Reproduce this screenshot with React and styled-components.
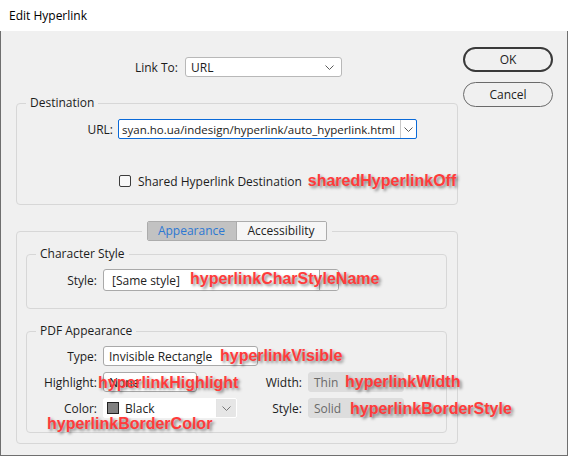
import React from 'react';
import styled, { createGlobalStyle } from 'styled-components';

const GlobalStyle = createGlobalStyle`
  html, body {
    margin: 0;
    padding: 0;
    background: #ffffff;
  }
  body {
    font-family: 'Open Sans', 'Noto Sans', sans-serif;
    font-size: 12px;
    color: #1c1c1c;
  }
`;

const Chevron = ({ color = '#5a5a5a' }) => (
  <svg width="9" height="5" viewBox="0 0 9 5">
    <path d="M0.5 0.5 L4.5 4.5 L8.5 0.5" fill="none" stroke={color} strokeWidth="1" />
  </svg>
);

const Frame = styled.div`
  width: 568px;
  height: 456px;
  display: flex;
  flex-direction: column;
`;

const TitleBar = styled.div`
  height: 31px;
  flex: none;
  background: #ffffff;
  display: flex;
  align-items: center;
  padding-left: 9px;
  font-size: 12px;
  color: #000;
`;

const Body = styled.div`
  flex: 1;
  background: #f0f0f0;
  border: 1px solid #6f6f6f;
  border-top: none;
  display: flex;
  align-items: flex-start;
  gap: 5px;
  padding: 16px 0 0 15px;
`;

const MainColumn = styled.div`
  width: 442px;
  display: flex;
  flex-direction: column;
  padding-top: 10px;
`;

const ButtonColumn = styled.div`
  width: 90px;
  display: flex;
  flex-direction: column;
  gap: 10px;
`;

const DialogButton = styled.button`
  height: 25px;
  box-sizing: border-box;
  border-radius: 13px;
  border: ${p => (p.$default ? '2px solid #3a3a3a' : '1px solid #6a6a6a')};
  background: #f0f0f0;
  font: inherit;
  font-size: 12px;
  color: #222;
  padding: 0;
`;

const LinkRow = styled.div`
  display: flex;
  align-items: center;
  height: 20px;
`;

const Label = styled.span`
  width: ${p => p.$w}px;
  flex: none;
  text-align: right;
  margin-right: ${p => p.$gap || 6}px;
  white-space: nowrap;
`;

const Select = styled.div`
  width: ${p => p.$w}px;
  height: 20px;
  box-sizing: border-box;
  background: #fff;
  border: 1px solid #b8b8b8;
  border-radius: 3px;
  display: flex;
  align-items: center;
  justify-content: space-between;
  padding: 0 7px 0 5px;
`;

const Group = styled.fieldset`
  margin: ${p => p.$mt || 0}px ${p => p.$mx || 0}px 0;
  padding: ${p => p.$pad};
  border: 1px solid #d7d7d7;
  border-radius: 4px;
  min-width: 0;
`;

const Legend = styled.legend`
  margin-left: 9px;
  padding: 0 4px;
  font-size: 12px;
  line-height: 16px;
`;

const TabLegend = styled.legend`
  margin: 0 auto;
  padding: 0 5px;
  line-height: 0;
`;

const TabStrip = styled.div`
  display: flex;
  border: 1px solid #acacac;
  border-radius: 2px;
  overflow: hidden;
`;

const Tab = styled.div`
  height: 18px;
  display: flex;
  align-items: center;
  justify-content: center;
  width: ${p => p.$w}px;
  font-size: 12px;
  background: ${p => (p.$active ? '#c2c2c2' : '#f6f6f6')};
  color: ${p => (p.$active ? '#2d78d2' : '#222')};
  & + & {
    border-left: 1px solid #acacac;
  }
`;

const Row = styled.div`
  position: relative;
  display: flex;
  align-items: center;
  height: ${p => p.$h || 20}px;
  margin-top: ${p => p.$mt || 0}px;
`;

const UrlCombo = styled.div`
  width: 299px;
  height: 20px;
  box-sizing: border-box;
  border: 1px solid #0a6ad9;
  border-radius: 2px;
  background: #fff;
  display: flex;
  align-items: stretch;
`;

const UrlText = styled.span`
  flex: 1;
  padding-left: 3px;
  display: flex;
  align-items: center;
  font-size: 11.5px;
  white-space: nowrap;
  overflow: hidden;
`;

const ComboButton = styled.span`
  width: ${p => p.$w || 15}px;
  flex: none;
  display: flex;
  align-items: center;
  justify-content: center;
  border-left: 1px solid ${p => p.$line || '#c8c8c8'};
  background: ${p => p.$bg || 'transparent'};
`;

const CheckBox = styled.span`
  width: 12px;
  height: 12px;
  box-sizing: border-box;
  border: 1px solid #3c3c3c;
  border-radius: 2px;
  background: #f8f8f8;
  margin: 0 7px 0 102px;
  flex: none;
`;

const Field = styled.div`
  width: ${p => p.$w}px;
  height: ${p => p.$h || 20}px;
  box-sizing: border-box;
  background: ${p => (p.$disabled ? '#dddddd' : '#ffffff')};
  border: 1px solid ${p => (p.$disabled ? '#dddddd' : p.$plain ? '#ffffff' : '#a9a9a9')};
  border-radius: 3px;
  color: ${p => (p.$disabled ? '#6a6a6a' : '#222')};
  display: flex;
  align-items: stretch;
  overflow: hidden;
  flex: none;
`;

const FieldText = styled.span`
  flex: 1;
  display: flex;
  align-items: center;
  padding-left: ${p => p.$pl || 5}px;
  white-space: nowrap;
  font-size: 12px;
`;

const Swatch = styled.span`
  width: 12px;
  height: 12px;
  box-sizing: border-box;
  background: #808080;
  border: 1px solid #222;
  margin-right: 6px;
`;

const PdfGrid = styled.div`
  display: grid;
  grid-template-columns: 70px 134px 59px 95px;
  grid-auto-rows: 20px;
  column-gap: 6px;
  row-gap: 6px;
  align-items: center;
  padding-top: 7px;
`;

const GridLabel = styled.span`
  text-align: right;
  white-space: nowrap;
  grid-column: ${p => p.$col || 1};
`;

const GridCell = styled.div`
  grid-column: ${p => p.$span || 'auto'};
  position: relative;
  display: flex;
`;

const Note = styled.span`
  font-family: 'Liberation Sans', Arial, sans-serif;
  font-weight: bold;
  font-size: 16px;
  line-height: 18px;
  color: #ff3b3b;
  text-shadow: 2px 2px 3px rgba(0, 0, 0, 0.45);
  white-space: nowrap;
`;

const FloatNote = styled(Note)`
  position: absolute;
  left: ${p => p.$x}px;
  top: ${p => p.$y}px;
  z-index: 2;
`;

export default function App() {
  return (
    <>
      <GlobalStyle />
      <Frame>
        <TitleBar>Edit Hyperlink</TitleBar>
        <Body>
          <MainColumn>
            <LinkRow>
              <Label $w={162} $gap={7}>Link To:</Label>
              <Select $w={157}>
                <span>URL</span>
                <Chevron />
              </Select>
            </LinkRow>

            <Group $mt={18} $pad="8px 0 15px">
              <Legend>Destination</Legend>
              <Row>
                <Label $w={96} $gap={5}>URL:</Label>
                <UrlCombo>
                  <UrlText>syan.ho.ua/indesign/hyperlink/auto_hyperlink.html</UrlText>
                  <ComboButton>
                    <Chevron />
                  </ComboButton>
                </UrlCombo>
              </Row>
              <Row $h={16} $mt={34}>
                <CheckBox />
                <span>Shared Hyperlink Destination</span>
                <Note style={{ marginLeft: 6 }}>sharedHyperlinkOff</Note>
              </Row>
            </Group>

            <Group $mt={16} $pad="5px 10px 10px 9px">
              <TabLegend>
                <TabStrip>
                  <Tab $active $w={88}>Appearance</Tab>
                  <Tab $w={89}>Accessibility</Tab>
                </TabStrip>
              </TabLegend>

              <Group $pad="7px 0 17px">
                <Legend>Character Style</Legend>
                <Row $h={22}>
                  <Label $w={70}>Style:</Label>
                  <Field $w={236} $h={22}>
                    <FieldText $pl={8}>[Same style]</FieldText>
                    <ComboButton $w={18} $line="#a9a9a9" $bg="#f2f2f2" />
                  </Field>
                  <FloatNote $x={163} $y={1}>hyperlinkCharStyleName</FloatNote>
                </Row>
              </Group>

              <Group $mt={14} $pad="0 0 14px">
                <Legend>PDF Appearance</Legend>
                <PdfGrid>
                  <GridLabel>Type:</GridLabel>
                  <GridCell $span="2 / 5">
                    <Field $w={155}>
                      <FieldText>Invisible Rectangle</FieldText>
                    </Field>
                    <FloatNote $x={117} $y={1}>hyperlinkVisible</FloatNote>
                  </GridCell>

                  <GridLabel>Highlight:</GridLabel>
                  <GridCell>
                    <Field $w={94}>
                      <FieldText>None</FieldText>
                    </Field>
                    <FloatNote $x={-5} $y={2}>hyperlinkHighlight</FloatNote>
                  </GridCell>
                  <GridLabel $col={3}>Width:</GridLabel>
                  <GridCell>
                    <Field $w={96} $disabled>
                      <FieldText>Thin</FieldText>
                    </Field>
                    <FloatNote $x={37} $y={1}>hyperlinkWidth</FloatNote>
                  </GridCell>

                  <GridLabel>Color:</GridLabel>
                  <GridCell>
                    <Field $w={134} $plain style={{ borderRadius: 2 }}>
                      <FieldText $pl={3}>
                        <Swatch />
                        Black
                      </FieldText>
                      <ComboButton $w={19} $line="#e4e4e4" $bg="#e6e6e6">
                        <Chevron color="#777" />
                      </ComboButton>
                    </Field>
                    <FloatNote $x={-56} $y={17}>hyperlinkBorderColor</FloatNote>
                  </GridCell>
                  <GridLabel $col={3}>Style:</GridLabel>
                  <GridCell>
                    <Field $w={96} $disabled>
                      <FieldText>Solid</FieldText>
                    </Field>
                    <FloatNote $x={42} $y={2}>hyperlinkBorderStyle</FloatNote>
                  </GridCell>
                </PdfGrid>
              </Group>
            </Group>
          </MainColumn>

          <ButtonColumn>
            <DialogButton $default>OK</DialogButton>
            <DialogButton>Cancel</DialogButton>
          </ButtonColumn>
        </Body>
      </Frame>
    </>
  );
}
